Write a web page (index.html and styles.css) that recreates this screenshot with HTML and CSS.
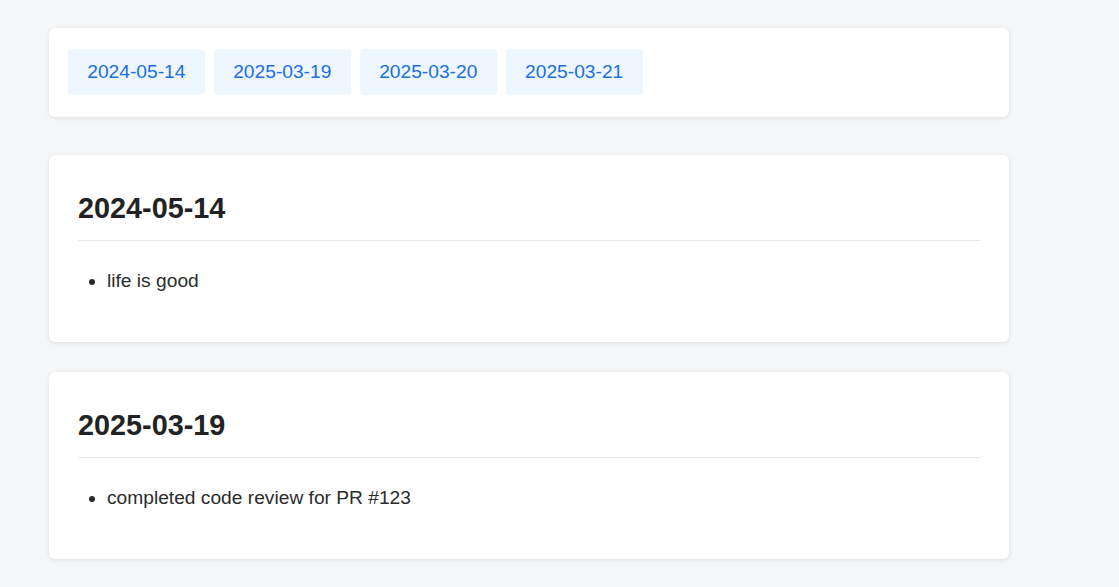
FILE: index.html
```html
<!DOCTYPE html>
<html lang="en">
<head>
<meta charset="utf-8">
<title>Journal</title>
<link rel="stylesheet" href="styles.css">
</head>
<body>
<div class="container">
  <nav class="card nav">
    <a class="date-btn" href="#d1">2024-05-14</a>
    <a class="date-btn" href="#d2">2025-03-19</a>
    <a class="date-btn" href="#d3">2025-03-20</a>
    <a class="date-btn" href="#d4">2025-03-21</a>
  </nav>
  <section class="card entry" id="d1">
    <h2>2024-05-14</h2>
    <ul>
      <li>life is good</li>
    </ul>
  </section>
  <section class="card entry" id="d2">
    <h2>2025-03-19</h2>
    <ul>
      <li>completed code review for PR #123</li>
    </ul>
  </section>
</div>
</body>
</html>
```

FILE: styles.css
```css
html, body {
  margin: 0;
  padding: 0;
}
body {
  background: #f5f6f8;
  font-family: "Liberation Sans", Arial, sans-serif;
  font-size: 19.2px;
  color: #2b2b2b;
}
.container {
  width: 960px;
  padding: 28px 0 0 49px;
}
.card {
  background: #fff;
  border-radius: 6px;
  box-shadow: 0 1px 4px rgba(0, 0, 0, 0.1);
}
.nav {
  display: flex;
  gap: 9.3px;
  padding: 21px 19px 22px;
  margin-bottom: 38px;
}
.date-btn {
  display: block;
  padding: 12px 19.25px;
  line-height: 22px;
  background: #eef6ff;
  color: #1a6fe0;
  text-decoration: none;
  border-radius: 4px;
}
.entry {
  padding: 29px;
  margin-bottom: 30px;
}
.entry h2 {
  margin: 8px 0 0;
  font-size: 28.8px;
  line-height: 33px;
  font-weight: bold;
  color: #222;
  padding-bottom: 15px;
  border-bottom: 1px solid #e8e8e8;
}
.entry ul {
  margin: 29px 0 21px;
  padding-left: 29px;
  line-height: 22px;
}
```
